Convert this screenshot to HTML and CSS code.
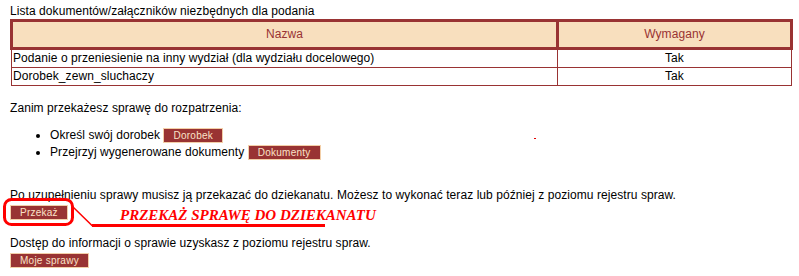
FILE: index.html
```html
<!DOCTYPE html>
<html lang="pl">

<head>
    <meta charset="UTF-8">
    <meta name="viewport" content="width=device-width, initial-scale=1.0">
    <title>Sprawa</title>
    <link rel="stylesheet" href="styles.css">
</head>

<body>
    <div class="content">
        <div class="title">Lista dokumentów/załączników niezbędnych dla podania</div>
        <table class="docs">
            <tr>
                <th class="colName">Nazwa</th>
                <th>Wymagany</th>
            </tr>
            <tr>
                <td>Podanie o przeniesienie na inny wydział (dla wydziału docelowego)</td>
                <td class="center">Tak</td>
            </tr>
            <tr>
                <td>Dorobek_zewn_sluchaczy</td>
                <td class="center">Tak</td>
            </tr>
        </table>

        <p class="intro">Zanim przekażesz sprawę do rozpatrzenia:</p>
        <ul class="steps">
            <li>Określ swój dorobek <button class="btn">Dorobek</button><span class="dot"></span></li>
            <li>Przejrzyj wygenerowane dokumenty <button class="btn">Dokumenty</button></li>
        </ul>

        <p class="send">Po uzupełnieniu sprawy musisz ją przekazać do dziekanatu. Możesz to wykonać teraz lub później z poziomu rejestru spraw.<br>
            <button class="btn">Przekaż</button>
        </p>

        <p class="access">Dostęp do informacji o sprawie uzyskasz z poziomu rejestru spraw.<br>
            <button class="btn">Moje sprawy</button>
        </p>

        <!-- adnotacja na zrzucie -->
        <svg class="note" width="330" height="32" viewBox="0 0 330 32">
            <rect x="4.5" y="1.5" width="68" height="25" rx="7" ry="7" fill="none" stroke="#ff0000" stroke-width="3" />
            <polyline points="73,9 92,27.5 325,27.5" fill="none" stroke="#ff0000" stroke-width="1.5" />
            <line x1="92" y1="27.5" x2="325" y2="27.5" stroke="#ff0000" stroke-width="3" />
        </svg>
        <div class="noteText">PRZEKAŻ SPRAWĘ DO DZIEKANATU</div>
    </div>
</body>

</html>
```

FILE: styles.css
```css
html,
body {
    margin: 0;
    padding: 0;
}

body {
    font-family: "Liberation Sans", Arial, sans-serif;
    font-size: 12px;
    letter-spacing: 0.07px;
    color: #000;
    background: #fff;
}

.content {
    position: relative;
    padding: 4px 0 0 10px;
}

.title {
    line-height: 15px;
}

.docs {
    width: 783px;
    border-collapse: collapse;
}

.docs th {
    background-color: #f8dfbe;
    color: #993333;
    font-weight: normal;
    border: 3px solid #993333;
    padding: 5px 2px;
    line-height: 15px;
}

.docs .colName {
    width: 70%;
}

.docs td {
    border: 1px solid #993333;
    padding: 1px 1px;
    line-height: 15px;
}

.docs td.center {
    text-align: center;
}

.intro,
.send,
.access {
    margin: 0;
    line-height: 17px;
}

.intro {
    margin-top: 14px;
}

.steps {
    margin: 10px 0 0 0;
    padding-left: 40px;
    line-height: 17px;
}

.send {
    margin-top: 26px;
}

.access {
    margin-top: 14px;
}

.btn {
    font-family: "Liberation Sans", Arial, sans-serif;
    font-size: 10px;
    letter-spacing: 0.25px;
    line-height: 13px;
    height: 15px;
    margin: 0;
    padding: 0 9px;
    color: #fbe3c8;
    background-color: #993333;
    border: 1px solid #f3cfa8;
    border-radius: 0;
    vertical-align: baseline;
}

.dot {
    display: inline-block;
    width: 2px;
    height: 1px;
    margin-left: 311px;
    background-color: #e00000;
}

.note {
    position: absolute;
    left: 0;
    top: 198px;
}

.noteText {
    position: absolute;
    left: 120px;
    top: 207px;
    font-family: "Liberation Serif", "Times New Roman", serif;
    font-size: 15px;
    font-weight: bold;
    font-style: italic;
    letter-spacing: 0;
    line-height: 17px;
    color: #ff0000;
    white-space: nowrap;
}
```
